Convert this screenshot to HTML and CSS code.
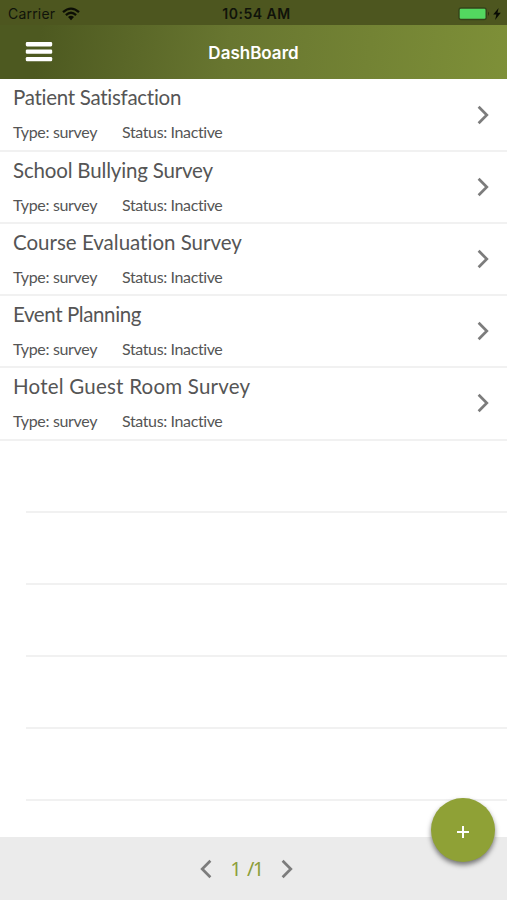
FILE: index.html
```html
<!DOCTYPE html>
<html lang="en">
<head>
<meta charset="utf-8">
<title>DashBoard</title>
<link rel="stylesheet" href="styles.css">
</head>
<body>
<div class="app">
  <div class="status">
    <div class="carrier"><span>Carrier</span>
      <svg width="18" height="14" viewBox="0 0 18 14" fill="none" stroke="#0c0e05" stroke-width="2.3"><path d="M1 5.2Q9-2 17 5.2M3.9 8.1Q9 3.5 14.1 8.1"/><path d="M6 10Q9 7.5 12 10L9 13.2Z" fill="#0c0e05" stroke="none"/></svg>
    </div>
    <time class="clock">10:54 AM</time>
    <div class="power">
      <svg width="45" height="14" viewBox="0 0 45 14"><rect x=".3" y=".3" width="28.6" height="13" rx="3" fill="#35431a"/><rect x="1.7" y="1.8" width="25.8" height="10" rx="1.2" fill="#53d860"/><path d="M30 4.6q2.2 2.2 0 4.4z" fill="#2c3512"/><path d="M40.6 1L35.2 7.6h3.2L37.1 13 42.8 5.8h-3.3z" fill="#090b04"/></svg>
    </div>
  </div>
  <header class="nav">
    <svg class="menu" width="28" height="22" viewBox="0 0 28 22" fill="#fff"><rect x=".8" y="1.1" width="26.4" height="4.3" rx="1.3"/><rect x=".8" y="8.5" width="26.4" height="4.3" rx="1.3"/><rect x=".8" y="15.9" width="26.4" height="4.3" rx="1.3"/></svg>
    <h1>DashBoard</h1>
  </header>
  <main class="list">
    <article class="row"><div><h2 class="t1">Patient Satisfaction</h2><p><span class="type">Type: survey</span><span class="state">Status: Inactive</span></p></div><svg class="chev" viewBox="0 0 12 20"><path d="M1.6 1.8L9.8 10L1.6 18.2"/></svg></article>
    <article class="row"><div><h2 class="t2">School Bullying Survey</h2><p><span class="type">Type: survey</span><span class="state">Status: Inactive</span></p></div><svg class="chev" viewBox="0 0 12 20"><path d="M1.6 1.8L9.8 10L1.6 18.2"/></svg></article>
    <article class="row"><div><h2 class="t3">Course Evaluation Survey</h2><p><span class="type">Type: survey</span><span class="state">Status: Inactive</span></p></div><svg class="chev" viewBox="0 0 12 20"><path d="M1.6 1.8L9.8 10L1.6 18.2"/></svg></article>
    <article class="row"><div><h2 class="t4">Event Planning</h2><p><span class="type">Type: survey</span><span class="state">Status: Inactive</span></p></div><svg class="chev" viewBox="0 0 12 20"><path d="M1.6 1.8L9.8 10L1.6 18.2"/></svg></article>
    <article class="row"><div><h2 class="t5">Hotel Guest Room Survey</h2><p><span class="type">Type: survey</span><span class="state">Status: Inactive</span></p></div><svg class="chev" viewBox="0 0 12 20"><path d="M1.6 1.8L9.8 10L1.6 18.2"/></svg></article>
    <div class="row empty"></div>
    <div class="row empty"></div>
    <div class="row empty"></div>
    <div class="row empty"></div>
    <div class="row empty"></div>
  </main>
  <footer class="pager">
    <svg class="chev" viewBox="0 0 12 20"><path d="M10.4 1.8L2.2 10L10.4 18.2"/></svg>
    <span class="page">1 <span class="total">/1</span></span>
    <svg class="chev" viewBox="0 0 12 20"><path d="M1.6 1.8L9.8 10L1.6 18.2"/></svg>
  </footer>
  <button class="add" aria-label="Add survey"><svg width="14" height="14" viewBox="0 0 14 14"><path d="M7 1v12M1 7h12" stroke="#fff" stroke-width="2"/></svg></button>
</div>
</body>
</html>
```
FILE: styles.css
```css
* { box-sizing: border-box; }
body, h1, h2, p { margin: 0; }
body { background: #fff; font-family: Lato, sans-serif; font-variant-ligatures: none; }
.app { position: relative; display: flex; flex-direction: column; width: 507px; height: 900px; overflow: hidden; }

.status {
  display: grid; grid-template-columns: 1fr auto 1fr; align-items: center;
  flex: none; height: 25px; padding: 3px 5px 0 8px;
  background: #4d561f; color: #10130a;
  font: 14px/20px Inter, sans-serif;
}
.carrier { display: flex; align-items: center; gap: 7px; letter-spacing: .2px; }
.clock { font-weight: 600; letter-spacing: .5px; padding-left: 3px; }
.power { display: flex; justify-content: flex-end; }
.power svg { margin: 0 -1px 1px 0; }

.nav {
  display: grid; grid-template-columns: 1fr auto 1fr; align-items: center;
  flex: none; height: 54px; padding: 0 25px;
  background: linear-gradient(98deg, #4d5920 8%, #687630 45%, #7e9038 100%);
}
.nav h1 { color: #fff; font: 600 17px/24px Inter, sans-serif; padding-top: 2px; }

.list { flex: none; height: 758px; overflow: hidden; }
.row {
  display: flex; justify-content: space-between; align-items: flex-start;
  height: 72.15px; padding: 5px 18px 0 13px;
  border-bottom: 2px solid #f1f1f1; color: #555;
}
.list .row:first-child { height: 73px; padding-top: 6px; }
.empty { margin-left: 26px; }
.row h2 { font-size: 20.5px; font-weight: 400; line-height: 26px; white-space: nowrap; }
.row .t1 { letter-spacing: -.28px; margin-top: -1px; margin-bottom: 1px; }
.row .t2 { letter-spacing: -.18px; }
.row .t3 { letter-spacing: 0; }
.row .t4 { letter-spacing: -.4px; }
.row .t5 { letter-spacing: .22px; }
.row p { display: flex; margin-top: 12px; font-size: 16px; line-height: 20px; white-space: nowrap; }
.type { width: 109px; letter-spacing: -.32px; }
.state { letter-spacing: -.38px; }
.row .chev { margin-top: 20px; }
.chev { flex: none; width: 12px; height: 20px; fill: none; stroke: #7c7c7c; stroke-width: 2.7; }

.pager {
  display: flex; align-items: center; justify-content: center;
  flex: 1; padding-right: 14px; background: #ebebeb;
}
.page { width: 69px; text-align: center; color: #8c9e3a; font: 20px/26px "Noto Sans", sans-serif; }
.total { letter-spacing: -1.6px; }

.add {
  position: absolute; left: 431px; top: 798px; width: 64px; height: 64px;
  display: flex; align-items: center; justify-content: center;
  padding: 3px 0 0; border: 0; border-radius: 50%;
  background: #8fa136; box-shadow: 0 3px 5px rgba(0, 0, 0, .5);
}
```
